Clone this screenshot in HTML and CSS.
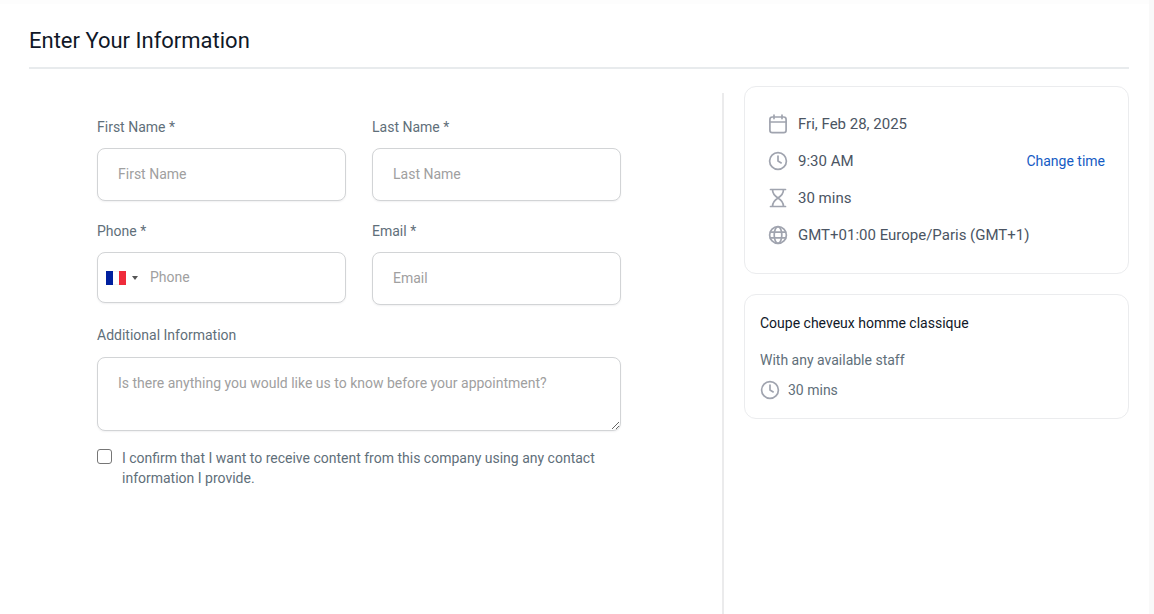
FILE: index.html
```html
<!DOCTYPE html>
<html lang="en">
<head>
<meta charset="utf-8">
<meta name="viewport" content="width=device-width, initial-scale=1">
<title>Enter Your Information</title>
<link rel="stylesheet" href="styles.css">
</head>
<body>
<svg class="sprite" aria-hidden="true">
  <symbol id="icon-clock" viewBox="0 0 20 20">
    <circle cx="10" cy="10" r="8.4"/>
    <path d="M10 5V10l3.2 1.9"/>
  </symbol>
</svg>
<main class="page">
  <header class="page-header">
    <h1 class="page-title">Enter Your Information</h1>
  </header>
  <div class="content">
    <section class="form-column">
      <form class="form">
        <div class="field">
          <label class="label" for="first-name">First Name *</label>
          <input class="control" id="first-name" type="text" placeholder="First Name">
        </div>
        <div class="field">
          <label class="label" for="last-name">Last Name *</label>
          <input class="control" id="last-name" type="text" placeholder="Last Name">
        </div>
        <div class="field">
          <label class="label" for="phone">Phone *</label>
          <div class="phone">
            <button class="country" type="button" aria-label="Country: France">
              <svg class="flag" viewBox="0 0 20 14" aria-hidden="true">
                <rect width="20" height="14" fill="#f3f3f3"/>
                <rect x="7" y="1" width="6" height="12" fill="#fff"/>
                <rect width="7" height="14" fill="#00209f"/>
                <rect x="13" width="7" height="14" fill="#ef2b3b"/>
              </svg>
              <span class="caret"></span>
            </button>
            <input class="phone-input" id="phone" type="tel" placeholder="Phone">
          </div>
        </div>
        <div class="field">
          <label class="label" for="email">Email *</label>
          <input class="control" id="email" type="email" placeholder="Email">
        </div>
        <div class="field field-wide field-notes">
          <label class="label" for="notes">Additional Information</label>
          <textarea class="control notes" id="notes" placeholder="Is there anything you would like us to know before your appointment?"></textarea>
        </div>
        <div class="consent field-wide">
          <input class="checkbox" id="consent" type="checkbox">
          <label for="consent">I confirm that I want to receive content from this company using any contact information I provide.</label>
        </div>
      </form>
    </section>
    <aside class="summary">
      <section class="card details">
        <div class="detail">
          <svg class="icon" viewBox="0 0 20 20" aria-hidden="true">
            <rect x="1.9" y="3" width="16.2" height="15.6" rx="2.4"/>
            <path d="M2 8h16M6 1.200v3.400M14 1.200v3.400"/>
          </svg>
          <span>Fri, Feb 28, 2025</span>
        </div>
        <div class="detail">
          <svg class="icon" aria-hidden="true"><use href="#icon-clock"/></svg>
          <span>9:30 AM</span>
          <a class="change" href="#">Change time</a>
        </div>
        <div class="detail">
          <svg class="icon" viewBox="0 0 20 20" aria-hidden="true">
            <path d="M2.5 1.5h15M2.5 18.5h15M4.500 1.500c0 4.400 2 6.300 5.500 8.500c3.500-2.200 5.500-4.100 5.500-8.500M4.500 18.500c0-4.400 2-6.300 5.500-8.500c3.500 2.200 5.500 4.100 5.500 8.500"/>
          </svg>
          <span>30 mins</span>
        </div>
        <div class="detail">
          <svg class="icon" viewBox="0 0 20 20" aria-hidden="true">
            <circle cx="10" cy="10" r="8.400"/>
            <ellipse cx="10" cy="10" rx="3.800" ry="8.400"/>
            <path d="M2.300 7.200h15.400M2.300 12.800h15.400"/>
          </svg>
          <span>GMT+01:00 Europe/Paris (GMT+1)</span>
        </div>
      </section>
      <section class="card service">
        <h2 class="service-title">Coupe cheveux homme classique</h2>
        <p class="staff">With any available staff</p>
        <div class="duration">
          <svg class="icon" aria-hidden="true"><use href="#icon-clock"/></svg>
          <span>30 mins</span>
        </div>
      </section>
    </aside>
  </div>
</main>
</body>
</html>
```
FILE: styles.css
```css
* {
  box-sizing: border-box;
}

body {
  margin: 0;
  padding-right: 5px;
  background: #f9f9f9;
  color: #5f6f7a;
  font: 14px/20px Roboto, sans-serif;
}

.sprite {
  display: none;
}

.page {
  display: flex;
  flex-direction: column;
  min-height: 100vh;
  padding: 21px 20px 0 29px;
  border-top: 4px solid #fdfdfd;
  background: #fff;
}

.page-header {
  padding-bottom: 10px;
  border-bottom: 2px solid #e8ebed;
}

.page-title {
  margin: 0;
  color: #101828;
  font-size: 22px;
  font-weight: 400;
  line-height: 32px;
}

.content {
  display: flex;
  flex: 1;
}

.form-column {
  flex: 1;
  margin: 24px 20px 0 0;
  padding: 24px 101px 0 68px;
  border-right: 2px solid #ebebec;
}

.form {
  display: grid;
  grid-template-columns: 1fr 1fr;
  gap: 20px 26px;
}

.field {
  display: flex;
  flex-direction: column;
  gap: 11px;
  min-width: 0;
}

.field-notes {
  gap: 12px;
}

.field-wide {
  grid-column: 1 / -1;
}

.control,
.phone {
  width: 100%;
  border: 1px solid #d2d4d6;
  border-radius: 8px;
  background: #fff;
  box-shadow: 0 1px 2px rgba(16, 24, 40, 0.06);
}

.control {
  height: 53px;
  padding: 0 20px 2px;
  color: #344054;
  font: inherit;
}

.control::placeholder,
.phone-input::placeholder {
  color: #a0a0a0;
  opacity: 1;
}

.phone {
  display: flex;
  height: 51px;
}

.country {
  display: flex;
  align-items: center;
  gap: 6px;
  padding: 0 8px;
  border: 0;
  background: none;
}

.flag {
  width: 20px;
  height: 14px;
}

.caret {
  border: 3px solid transparent;
  border-top: 4px solid #555;
  border-bottom: 0;
}

.phone-input {
  flex: 1;
  min-width: 0;
  padding: 0 4px 2px;
  border: 0;
  background: none;
  color: #344054;
  font: inherit;
}

.notes {
  height: 74px;
  padding: 15px 20px;
  resize: vertical;
}

.consent {
  display: flex;
  gap: 10px;
  margin-top: -3px;
}

.checkbox {
  flex: none;
  width: 15px;
  height: 15px;
  margin: 1px 0;
  border: 1px solid #767676;
  border-radius: 3px;
  background: #fff;
  appearance: none;
}

.checkbox:checked {
  background: #155eef;
}

.summary {
  display: flex;
  flex-direction: column;
  gap: 20px;
  width: 35%;
  padding-top: 17px;
}

.card {
  border: 1px solid #ebecee;
  border-radius: 12px;
}

.details {
  display: flex;
  flex-direction: column;
  gap: 17px;
  padding: 27px 23px 28px;
  color: #4b5563;
  font-size: 15px;
}

.detail {
  display: flex;
  align-items: center;
  gap: 10px;
}

.icon {
  flex: none;
  width: 20px;
  height: 20px;
  fill: none;
  stroke: #a0a4af;
  stroke-width: 1.7;
  stroke-linecap: round;
  stroke-linejoin: round;
}

.change {
  margin-left: auto;
  color: #155bc4;
  font-size: 14px;
  text-decoration: none;
}

.service {
  padding: 18px 15px;
}

.service-title {
  margin: 0 0 17px;
  color: #101828;
  font-size: 14px;
  font-weight: 400;
}

.staff {
  margin: 0 0 10px;
}

.duration {
  display: flex;
  align-items: center;
  gap: 8px;
}
```
